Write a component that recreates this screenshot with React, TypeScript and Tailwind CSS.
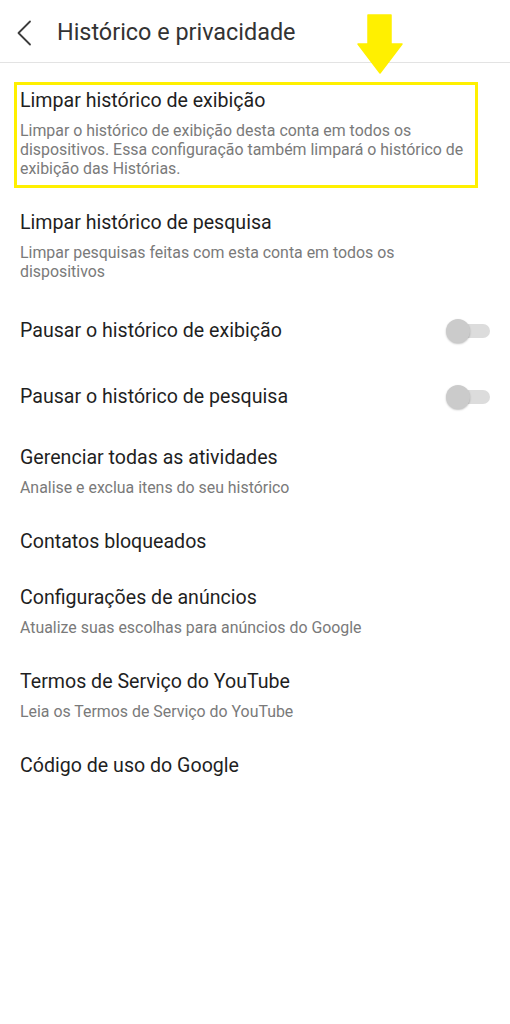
import React from "react";

type Item = { title: string; desc?: string; toggle?: boolean };

const items: Item[] = [
  {
    title: "Limpar histórico de exibição",
    desc: "Limpar o histórico de exibição desta conta em todos os dispositivos. Essa configuração também limpará o histórico de exibição das Histórias.",
  },
  {
    title: "Limpar histórico de pesquisa",
    desc: "Limpar pesquisas feitas com esta conta em todos os dispositivos",
  },
  { title: "Pausar o histórico de exibição", toggle: true },
  { title: "Pausar o histórico de pesquisa", toggle: true },
  {
    title: "Gerenciar todas as atividades",
    desc: "Analise e exclua itens do seu histórico",
  },
  { title: "Contatos bloqueados" },
  {
    title: "Configurações de anúncios",
    desc: "Atualize suas escolhas para anúncios do Google",
  },
  {
    title: "Termos de Serviço do YouTube",
    desc: "Leia os Termos de Serviço do YouTube",
  },
  { title: "Código de uso do Google" },
];

function Toggle() {
  return (
    <div className="relative w-[44px] h-[24px] flex items-center">
      <div className="ml-[6px] w-[38px] h-[14px] rounded-full bg-[#dcdcdc]" />
      <div className="absolute left-0 top-0 w-[24px] h-[24px] rounded-full bg-[#cbcbcb] shadow-[0_1px_2px_rgba(0,0,0,0.25)]" />
    </div>
  );
}

export default function App() {
  return (
    <div
      className="relative w-[510px] h-[1024px] bg-white overflow-hidden"
      style={{ fontFamily: "Roboto, 'Noto Sans', sans-serif" }}
    >
      {/* header */}
      <div className="h-[62px] flex items-center border-b border-[#e3e3e3] box-content">
        <svg width="16" height="26" viewBox="0 0 16 26" className="ml-[16px] mt-[4px]">
          <path d="M14 1.5 L2.5 13 L14 24.5" fill="none" stroke="#3c3c3c" strokeWidth="1.8" strokeLinecap="round" strokeLinejoin="round" />
        </svg>
        <h1 className="ml-[25px] text-[23.4px] text-[#333] leading-none mt-[4px]">Histórico e privacidade</h1>
      </div>

      <div className="pt-[10px]">
        {items.map((item) =>
          item.toggle ? (
            <div key={item.title} className="h-[66px] flex items-center justify-between pl-[20px] pr-[20px]">
              <span className="text-[19.6px] leading-[24px] text-[#1f1f1f]">{item.title}</span>
              <Toggle />
            </div>
          ) : (
            <div key={item.title} className={`px-[20px] pt-4 ${item.desc ? "pb-[17px]" : "pb-4"}`}>
              <div className="text-[19.6px] leading-[24px] text-[#1f1f1f]">{item.title}</div>
              {item.desc && (
                <p className="mt-2 text-[15.9px] leading-[19px] text-[#7a7a7a] pr-[10px]">{item.desc}</p>
              )}
            </div>
          )
        )}
      </div>

      {/* annotation overlay */}
      <div className="absolute left-[14px] top-[82px] w-[464px] h-[106px] border-[3px] border-[#fff000]" />
      <svg className="absolute left-[355px] top-[14px]" width="50" height="62" viewBox="0 0 50 62">
        <path d="M13 1 H36 V30 H47 L25 59 L3 30 H13 Z" fill="#fff000" stroke="#fff000" strokeWidth="1.5" strokeLinejoin="round" />
      </svg>
    </div>
  );
}
